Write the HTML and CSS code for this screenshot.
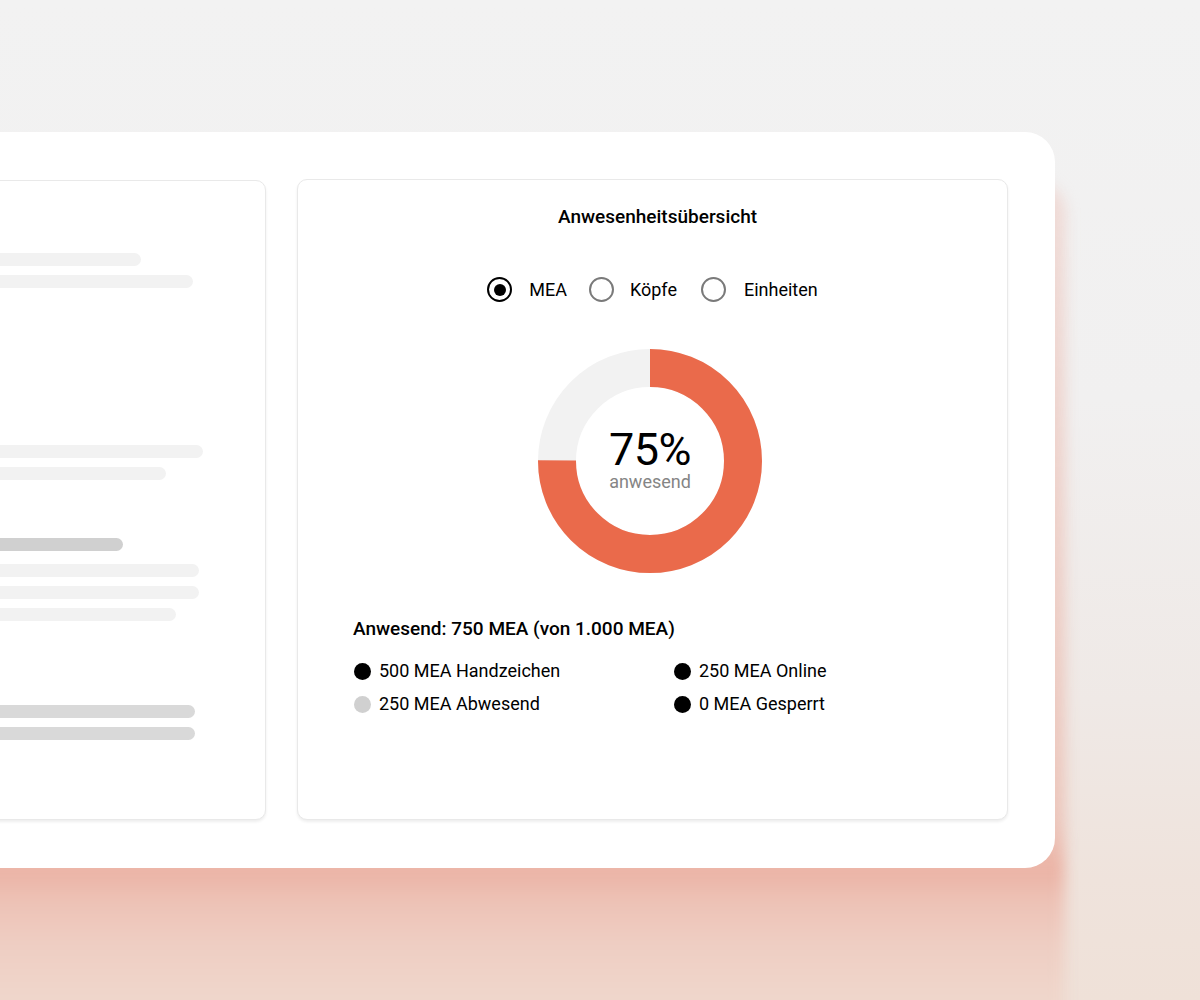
FILE: index.html
```html
<!DOCTYPE html>
<html lang="de">
<head>
<meta charset="utf-8">
<title>Anwesenheitsübersicht</title>
<link rel="stylesheet" href="styles.css">
</head>
<body>
<div class="stage">
  <div class="panel">
    <div class="card card-left">
      <div class="group g1">
        <div class="bar light w452"></div>
        <div class="bar light w504"></div>
      </div>
      <div class="group g2">
        <div class="bar light w514"></div>
        <div class="bar light w477"></div>
      </div>
      <div class="group g3">
        <div class="bar dark w434"></div>
        <div class="bar light w510 first-gap"></div>
        <div class="bar light w510"></div>
        <div class="bar light w487"></div>
      </div>
      <div class="group g4">
        <div class="bar mid w506"></div>
        <div class="bar mid w506"></div>
      </div>
    </div>
    <div class="card card-right">
      <h2 class="title">Anwesenheitsübersicht</h2>
      <div class="radios">
        <label class="radio"><span class="dot-ring checked"></span><span>MEA</span></label>
        <label class="radio"><span class="dot-ring"></span><span>Köpfe</span></label>
        <label class="radio"><span class="dot-ring"></span><span>Einheiten</span></label>
      </div>
      <div class="donut">
        <svg width="224" height="224" viewBox="0 0 224 224">
          <circle cx="112" cy="112" r="93" fill="none" stroke="#f2f2f2" stroke-width="38"/>
          <circle cx="112" cy="112" r="93" fill="none" stroke="#ea6a4b" stroke-width="38" stroke-dasharray="438.25 584.34" transform="rotate(-90 112 112)"/>
        </svg>
        <div class="donut-label">
          <div class="pct">75%</div>
          <div class="sub">anwesend</div>
        </div>
      </div>
      <div class="summary">
        <div class="summary-title">Anwesend: 750 MEA (von 1.000 MEA)</div>
        <div class="legend">
          <div class="item"><span class="ld black"></span>500 MEA Handzeichen</div>
          <div class="item"><span class="ld black"></span>250 MEA Online</div>
          <div class="item"><span class="ld grey"></span>250 MEA Abwesend</div>
          <div class="item"><span class="ld black"></span>0 MEA Gesperrt</div>
        </div>
      </div>
    </div>
  </div>
</div>
</body>
</html>
```
FILE: styles.css
```css
* { box-sizing: border-box; }
html, body { margin: 0; padding: 0; }
body {
  width: 1200px;
  height: 1000px;
  overflow: hidden;
  font-family: Roboto, "Noto Sans", Arial, sans-serif;
  color: #000;
  background: linear-gradient(to bottom, #f2f2f2 0px, #f1f0f0 400px, #efe9e6 700px, #efe3dc 880px, #efe1d8 1000px);
}
.stage {
  padding-top: 132px;
}
.panel {
  position: relative;
  margin-left: -400px;
  width: 1455px;
  height: 736px;
  background: #fff;
  border-radius: 30px;
  padding: 48px 47px 48px 48px;
  display: grid;
  grid-template-columns: 618px 711px;
  column-gap: 31px;
}
.panel::before {
  content: "";
  position: absolute;
  left: 0;
  right: -10px;
  top: 50px;
  bottom: -170px;
  z-index: -1;
  border-radius: 30px;
  background: linear-gradient(to bottom,
    rgba(238, 200, 192, 0.55) 0px,
    rgba(236, 190, 178, 0.8) 640px,
    #ebb3a5 688px,
    #edc2b6 720px,
    #eecdc2 760px,
    #efd5ca 810px,
    #efdbd1 856px);
  filter: blur(7px);
}
.card {
  background: #fff;
  border: 1px solid #e9e9e9;
  border-radius: 10px;
  box-shadow: 0 2px 3px rgba(0,0,0,0.07);
}
.card-left {
  padding: 72px 0 0 40px;
  display: flex;
  flex-direction: column;
}
.card-right {
  margin-top: -1px;
  display: flex;
  flex-direction: column;
  align-items: center;
  padding-top: 25px;
}
.group { display: flex; flex-direction: column; gap: 9px; }
.g2 { margin-top: 157px; }
.g3 { margin-top: 58px; }
.g3 .first-gap { margin-top: 4px; }
.g4 { margin-top: 84px; }
.bar { height: 13px; border-radius: 7px; }
.bar.light { background: #f2f2f2; }
.bar.dark { background: #d0d0d0; }
.bar.mid { background: #d9d9d9; }
.w452 { width: 452px; }
.w504 { width: 504px; }
.w514 { width: 514px; }
.w477 { width: 477px; }
.w434 { width: 434px; }
.w510 { width: 510px; }
.w487 { width: 487px; }
.w506 { width: 506px; }

.title {
  margin: 0;
  font-size: 19px;
  font-weight: 500;
  line-height: 24px;
  padding-left: 10px;
}
.radios {
  margin-top: 48px;
  display: flex;
  align-items: center;
  gap: 22px;
  font-size: 18px;
  line-height: 24px;
}
.radio {
  display: flex;
  align-items: center;
  gap: 17px;
}
.radios .radio:nth-child(2) { gap: 16px; }
.radios .radio:nth-child(3) { gap: 18px; margin-left: 2px; }
.dot-ring {
  width: 25px;
  height: 25px;
  border-radius: 50%;
  border: 2px solid #7a7a7a;
  display: flex;
  align-items: center;
  justify-content: center;
}
.dot-ring.checked {
  border: 2.5px solid #000;
}
.dot-ring.checked::after {
  content: "";
  width: 12px;
  height: 12px;
  border-radius: 50%;
  background: #000;
}
.donut {
  margin-top: 47px;
  width: 224px;
  height: 224px;
  position: relative;
  margin-left: -5px;
}
.donut svg { display: block; }
.donut-label {
  position: absolute;
  inset: 0;
  display: flex;
  flex-direction: column;
  align-items: center;
  justify-content: center;
  padding-bottom: 2px;
}
.pct {
  font-size: 45px;
  line-height: 44px;
  font-weight: 400;
  letter-spacing: -0.5px;
}
.sub {
  font-size: 18px;
  line-height: 20px;
  color: #858585;
  margin-top: 0px;
}
.summary {
  align-self: stretch;
  padding-left: 56px;
  margin-top: 44px;
}
.summary-title {
  font-size: 19px;
  font-weight: 500;
  line-height: 24px;
  margin-left: -1px;
}
.legend {
  margin-top: 18px;
  display: grid;
  grid-template-columns: 320px 320px;
  row-gap: 9px;
  font-size: 18px;
  line-height: 24px;
}
.item {
  display: flex;
  align-items: center;
  gap: 8px;
}
.ld {
  width: 17px;
  height: 17px;
  border-radius: 50%;
  flex: none;
}
.ld.black { background: #000; }
.ld.grey { background: #d0d0d0; }
```
